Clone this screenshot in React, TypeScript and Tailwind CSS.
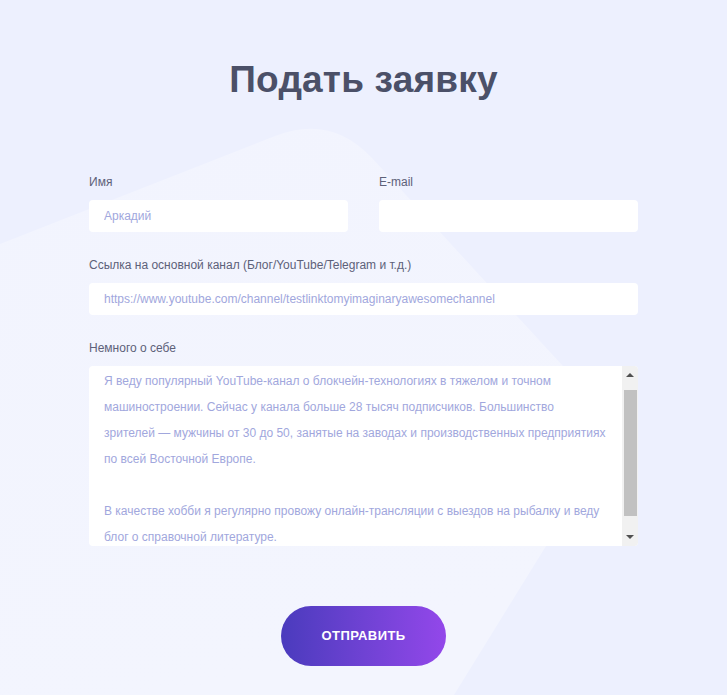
import { useState } from "react";

const fieldLabel = "block text-[12px] leading-[14px] text-[#5d6179] mb-[11px]";
const fieldInput =
  "block w-full h-[32px] rounded-[4px] bg-white px-[15px] text-[12px] text-[#a1a7dd] placeholder:text-[#a1a7dd] outline-none";

const aboutText = [
  "Я веду популярный YouTube-канал о блокчейн-технологиях в тяжелом и точном машиностроении. Сейчас у канала больше 28 тысяч подписчиков. Большинство зрителей — мужчины от 30 до 50, занятые на заводах и производственных предприятиях по всей Восточной Европе.",
  "",
  "В качестве хобби я регулярно провожу онлайн-трансляции с выездов на рыбалку и веду блог о справочной литературе.",
];

function Backdrop() {
  return (
    <svg
      className="pointer-events-none absolute inset-0 h-full w-full"
      viewBox="0 0 727 695"
      preserveAspectRatio="xMidYMin slice"
      aria-hidden="true"
    >
      <defs>
        <linearGradient id="shape" x1="0" y1="0" x2="0.3" y2="1">
          <stop offset="0" stopColor="#f2f4fe" />
          <stop offset="1" stopColor="#f3f5fe" />
        </linearGradient>
      </defs>
      <path
        d="M0 244 L275 136 Q331 114 372 158 L585 390 Q619 427 593 470 L454 695 L0 695 Z"
        fill="url(#shape)"
      />
    </svg>
  );
}

function FakeScrollbar() {
  return (
    <div className="flex w-[16px] shrink-0 flex-col items-center bg-[#f1f1f1]">
      <div className="flex h-[17px] w-full items-center justify-center">
        <span className="h-0 w-0 border-x-[4px] border-b-[4px] border-x-transparent border-b-[#505050]" />
      </div>
      <div className="mt-[7px] h-[126px] w-[13px] bg-[#c1c1c1]" />
      <div className="flex flex-1 items-end justify-center pb-[7px]">
        <span className="h-0 w-0 border-x-[4px] border-t-[4px] border-x-transparent border-t-[#505050]" />
      </div>
    </div>
  );
}

export default function App() {
  const [name, setName] = useState("");
  const [email, setEmail] = useState("");
  const [link, setLink] = useState("");

  return (
    <div
      className="relative min-h-screen overflow-hidden bg-[#edf0fe]"
      style={{ fontFamily: '"Liberation Sans", Arial, sans-serif' }}
    >
      <Backdrop />
      <main className="relative mx-auto w-[549px] pt-[59px] pb-[29px]">
        <h1 className="text-center text-[37px] font-bold leading-[42px] tracking-[0.2px] text-[#4b5068]">
          Подать заявку
        </h1>

        <form className="mt-[74px]" onSubmit={(e) => e.preventDefault()}>
          <div className="grid grid-cols-2 gap-x-[31px]">
            <label>
              <span className={fieldLabel}>Имя</span>
              <input
                className={fieldInput}
                placeholder="Аркадий"
                value={name}
                onChange={(e) => setName(e.target.value)}
              />
            </label>
            <label>
              <span className={fieldLabel}>E-mail</span>
              <input
                className={fieldInput}
                value={email}
                onChange={(e) => setEmail(e.target.value)}
              />
            </label>
          </div>

          <label className="mt-[26px] block">
            <span className={fieldLabel}>Ссылка на основной канал (Блог/YouTube/Telegram и т.д.)</span>
            <input
              className={fieldInput}
              placeholder="https://www.youtube.com/channel/testlinktomyimaginaryawesomechannel"
              value={link}
              onChange={(e) => setLink(e.target.value)}
            />
          </label>

          <div className="mt-[26px]">
            <span className={fieldLabel}>Немного о себе</span>
            <div className="flex h-[180px] overflow-hidden rounded-[4px] bg-white">
              <div className="flex-1 overflow-hidden pl-[15px] pr-[15px] pt-[2px] text-[12px] leading-[26px] text-[#a1a7dd]">
                {aboutText.map((para, i) =>
                  para ? (
                    <p key={i}>{para}</p>
                  ) : (
                    <p key={i} className="h-[26px]" />
                  ),
                )}
              </div>
              <FakeScrollbar />
            </div>
          </div>

          <div className="mt-[60px] flex justify-center">
            <button
              type="submit"
              className="h-[60px] w-[165px] rounded-full bg-gradient-to-r from-[#4a3bbd] to-[#9347ea] text-[13px] font-bold tracking-[0.4px] text-white"
            >
              ОТПРАВИТЬ
            </button>
          </div>
        </form>
      </main>
    </div>
  );
}
